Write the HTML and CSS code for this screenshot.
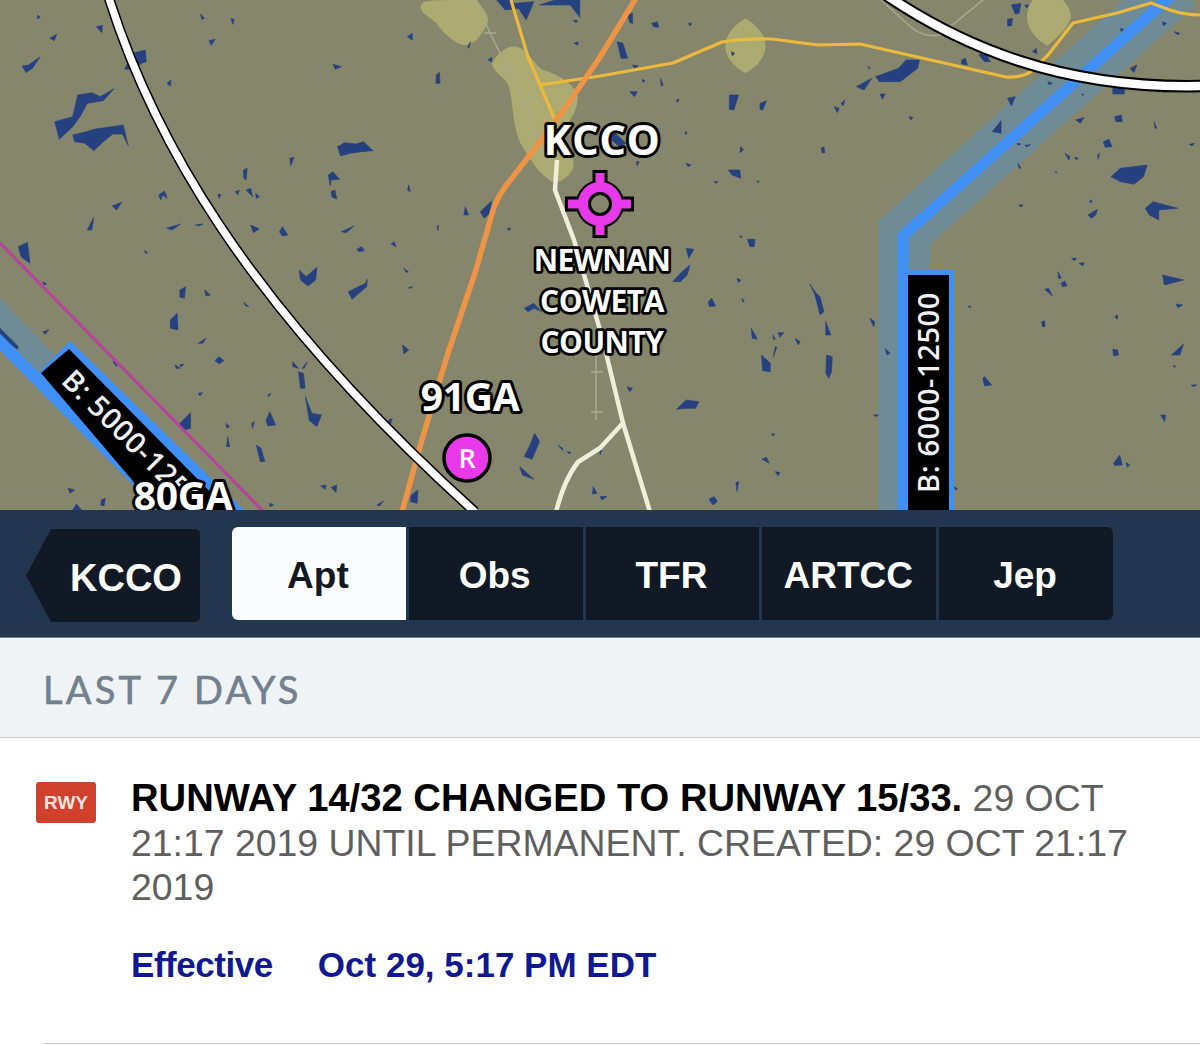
FILE: index.html
```
<!DOCTYPE html>
<html lang="en">
<head>
<meta charset="utf-8">
<title>KCCO</title>
<link rel="stylesheet" href="styles.css">
</head>
<body>
<div class="map">
<svg class="map-svg" width="1200" height="510" viewBox="0 0 1200 510">
  <rect class="land" width="1200" height="510"/>
  <g transform="scale(.3827 .3333)">
    <path class="urban" d="M1100 15C1110 0 1120 0 1245 0C1265 30 1285 50 1270 80C1255 110 1240 135 1210 135C1180 125 1160 100 1140 70C1125 50 1095 40 1100 15Z"/>
    <path class="urban" d="M1285 190C1300 160 1325 135 1350 140C1385 150 1390 190 1420 210C1460 225 1500 250 1510 290C1510 340 1480 370 1470 400C1480 440 1510 470 1495 510C1480 540 1450 560 1430 535C1400 510 1380 470 1360 430C1340 380 1340 300 1330 260C1320 230 1290 220 1285 190Z"/>
  </g>
  <g transform="translate(600 0) scale(.3827 .3333)">
    <path class="urban" d="M380 55C445 100 455 170 380 220C305 170 315 100 380 55Z"/>
    <path class="urban" d="M1130 0L1210 0C1240 40 1235 60 1205 100L1170 137C1130 115 1095 60 1130 0Z"/>
  </g>
  <path class="band" d="M904 520L904 233L1178 -14"/>
  <path class="blue-thin" d="M903 520L903 236L1182 -14"/>
  <polygon class="band-fill" points="0,298 55,355 35,378 0,340"/>
  <g transform="scale(.3827 .3333)">
    <path class="water" d="M99 45 105 52 97 57ZM252 80 268 76 266 98ZM130 115 148 103 142 122ZM603 56 612 58 609 73ZM524 42 534 55 527 58ZM546 122 562 118 552 136ZM58 198 75 195 105 170 85 205 68 218ZM870 193 892 200 876 208ZM1064 110 1078 100 1077 120ZM1140 225 1148 217 1150 250 1139 250ZM436 250 447 240 445 258ZM333 190 345 160 380 150 382 185 370 190 350 208 326 208ZM1298 0 1330 0 1345 10 1395 5 1375 60 1355 25 1320 30ZM1410 15 1450 0 1515 0 1515 52 1490 15ZM1500 130 1510 125 1510 135ZM1498 60 1510 62 1505 68ZM1222 140 1230 125 1225 145ZM1275 180 1285 172 1285 185Z"/>
    <path class="water" d="M143 365 175 355 190 350 203 285 240 278 262 290 298 266 270 302 228 310 212 345 190 380 155 418ZM190 405 225 395 245 388 290 380 322 375 335 437 320 402 295 402 270 425 245 452 222 430 195 425ZM882 440 900 428 930 432 950 425 975 452 945 455 915 460 890 468ZM757 475 768 472 760 497ZM636 510 646 505 643 540 637 535ZM858 525 870 515 887 538 865 540 863 558ZM865 575 875 570 880 597 868 592ZM1068 555 1072 575 1065 570ZM1216 620 1224 645 1212 645ZM1255 635 1285 603 1280 640 1265 655ZM1142 680 1146 675 1144 692ZM1325 685 1335 685 1330 692ZM415 585 430 573 437 595 425 585 420 600ZM293 618 318 607 305 630ZM228 690 245 652 240 690ZM435 685 472 672 450 690ZM510 675 530 672 520 678ZM655 675 677 687 662 698ZM730 695 738 680 752 705 738 708ZM892 695 925 678 905 698ZM932 748 945 740 952 752 938 755ZM1022 732 1030 725 1035 740ZM1055 805 1067 815 1062 818ZM1067 863 1078 860 1070 866ZM48 740 72 727 78 790 55 770ZM782 810 800 830 828 802 825 840 805 858 785 840ZM910 875 955 850 960 838 958 860 920 898ZM470 870 485 860 482 895 470 892ZM535 870 550 885 538 888ZM637 907 650 920 642 918ZM445 960 463 940 465 990 445 985ZM518 1030 538 1015 530 1030ZM562 1082 572 1070 585 1082 573 1092ZM112 995 128 990 118 1003ZM112 845 122 852 115 855ZM1052 1035 1068 1050 1055 1062ZM1370 925 1395 910 1415 935 1395 925 1380 935Z"/>
    <path class="water" d="M765 1085 780 1105 765 1100ZM790 1105 803 1085 795 1105ZM780 1115 793 1120 797 1165 785 1165ZM798 1190 815 1240 840 1245 828 1280 808 1262ZM1010 1265 1025 1255 1020 1275ZM470 1270 498 1238 498 1285 475 1292ZM695 1262 705 1235 720 1275 700 1278ZM658 1270 665 1265 660 1285ZM590 1270 600 1280 593 1285ZM670 1335 682 1345 692 1385 680 1385ZM595 1310 600 1340 592 1340ZM1385 1335 1397 1300 1410 1325 1390 1378 1370 1370ZM1458 1335 1470 1345 1470 1352ZM1482 1355 1492 1358 1488 1362ZM1358 1400 1395 1438 1365 1425ZM178 1465 195 1470 183 1480ZM265 1500 275 1495 272 1518 263 1515ZM190 1530 200 1512 213 1530ZM838 1458 852 1455 850 1468ZM865 1462 880 1455 878 1478ZM985 1515 1002 1503 992 1518ZM1075 1485 1092 1470 1090 1510 1072 1505ZM1550 1460 1560 1480 1548 1482ZM705 1510 715 1515 705 1520ZM458 1095 470 1105 460 1105ZM470 1095 480 1092 472 1102ZM518 1180 530 1178 522 1187ZM700 1185 708 1180 702 1190ZM295 1085 305 1080 305 1100ZM378 752 386 758 380 760ZM570 582 578 585 572 595ZM615 575 625 570 622 585ZM643 570 655 565 660 590ZM668 580 678 590 670 595ZM0 985 48 1040 45 1048 0 1010Z"/>
  </g>
  <g transform="translate(600 0) scale(.3827 .3333)">
    <path class="water" d="M72 45 85 40 85 70 78 68ZM135 70 150 65 153 82 140 80ZM232 68 240 72 234 78ZM45 125 60 130 72 175 55 175ZM85 195 100 198 90 205ZM110 238 118 243 112 247ZM158 235 165 255 160 258ZM78 275 98 275 90 290ZM200 300 207 298 202 308ZM338 285 362 285 350 330 338 328ZM418 310 435 303 425 330 418 328ZM343 155 352 160 346 168ZM670 260 710 235 690 270ZM720 230 780 205 800 180 835 180 830 205 785 245 730 245ZM732 282 745 282 738 298ZM630 310 640 300 635 318ZM612 320 625 325 620 338ZM808 350 818 352 812 360ZM368 440 375 450 365 458ZM578 445 585 440 588 458 580 458ZM225 490 238 495 230 500ZM95 485 102 485 97 498ZM335 510 365 510 368 535 345 525ZM298 545 308 545 302 550ZM410 543 416 543 413 548ZM222 395 228 398 224 404ZM20 410 40 400 68 430 50 440ZM385 718 405 718 403 740 392 740ZM365 707 372 710 368 713ZM225 745 245 748 232 775ZM190 845 210 820 235 795 228 825 210 845ZM358 835 368 840 362 848ZM283 905 292 895 302 918 285 920ZM372 895 377 905 372 905ZM548 852 565 880 575 890 585 935 575 945 565 900 560 880ZM590 965 603 1005 590 1005ZM395 985 408 1010 410 1018 398 1015ZM452 1005 458 1018 453 1018ZM465 998 480 998 470 1012ZM510 1015 523 1025 518 1035ZM458 1040 462 1042 453 1070ZM422 1065 445 1090 445 1115 425 1112ZM592 1065 607 1070 605 1115 598 1135 590 1120ZM70 1160 85 1165 78 1175ZM200 1228 225 1200 258 1205 250 1225 225 1225ZM705 955 718 965 715 980ZM745 1045 758 1060 750 1065ZM715 1245 728 1245 720 1250ZM448 1302 457 1302 452 1308ZM423 1378 435 1372 442 1390ZM458 1415 470 1418 465 1428ZM355 1448 362 1445 358 1475ZM285 1498 298 1490 307 1505 295 1515ZM0 1490 18 1490 5 1500ZM0 1350 5 1350 0 1365ZM925 1460 935 1468 928 1468Z"/>
    <path class="water" d="M1025 395 1048 362 1048 400ZM1065 295 1085 290 1075 318ZM1090 430 1100 432 1092 436ZM1110 436 1125 434 1115 440ZM1092 490 1100 505 1095 505ZM1170 245 1182 250 1174 255ZM1243 360 1265 352 1255 370ZM1345 350 1362 345 1365 365 1348 365ZM1315 425 1330 418 1338 440 1320 442ZM1448 365 1455 385 1450 385ZM1540 433 1553 430 1547 438ZM1215 460 1228 470 1225 480ZM1240 472 1250 475 1245 480ZM1300 465 1305 460 1302 478ZM1335 530 1360 505 1430 495 1420 530 1395 553 1360 545ZM1190 515 1194 517 1192 520ZM1095 615 1105 615 1100 622ZM1278 605 1285 600 1285 608ZM1275 645 1300 628 1295 645 1285 655ZM1425 625 1445 605 1510 625 1460 630 1460 660 1435 645ZM1232 775 1245 775 1240 782ZM1252 790 1265 788 1262 798ZM1197 815 1205 835 1198 835ZM1205 850 1215 843 1220 858 1208 860ZM1162 868 1172 865 1182 888ZM1470 825 1525 840 1475 855ZM1505 912 1523 915 1510 923ZM1154 965 1162 962 1163 980 1156 980ZM1345 950 1352 945 1352 958ZM1340 1048 1352 1050 1355 1065 1342 1068ZM1493 1065 1525 1032 1515 1065ZM1498 1097 1503 1097 1502 1103ZM1000 1135 1005 1130 1023 1155 1005 1158ZM1465 1245 1478 1245 1475 1265ZM1342 1390 1358 1365 1365 1395 1345 1397ZM1375 1388 1384 1395 1378 1402ZM962 918 970 920 965 923ZM1545 1155 1560 1155 1550 1160ZM1075 15 1100 10 1095 40 1085 42ZM1065 58 1078 55 1075 78 1065 78ZM1110 15 1120 15 1115 24ZM945 180 955 175 960 195 945 192ZM990 165 1005 155 1020 185 1005 185ZM1130 155 1140 145 1142 162ZM1385 205 1403 195 1395 218ZM1360 85 1368 88 1362 95ZM1470 65 1480 70 1472 78ZM1500 95 1515 100 1510 105ZM1258 282 1265 283 1260 286ZM1340 265 1370 265 1370 282 1340 282ZM700 200 706 203 702 206Z"/>
  </g>
  <path class="faint" d="M476 0L490 33L507 67L526 103L551 180M596 340V420M881 0L912 28Q925 38 940 35L983 0M484 33H496M502 68H514M520 103H532M591 372H603M591 412H603"/>
  <path class="road" d="M557 160L555 190L574 240L600 330L606 353L623 423L650 512M623 423L600 448L578 462Q564 480 556 512"/>
  <path class="yellow" d="M511 0L528 57L540 85L555 120M540 85L600 76L673 63L722 42Q745 38 772 39L818 45L860 44L1006 77Q1018 78 1029 73L1048 55L1073 23L1117 13L1151 3L1170 10Q1185 15 1200 15"/>
  <path class="orange" d="M636 -2L600 57L566 107L536 147L505 187Q498 197 494 207L475 273L448 353L421 443L402 512"/>
  <path class="edge-line" d="M0 243L264 512"/>
  <path class="blue-line" d="M-5 337L170 514"/>
  <polygon class="label-edge" points="70,341 36,376 165,514 248,514"/>
  <polygon class="label-bg" points="69,349 41,373 161,514 232,514"/>
  <text class="chip-text" transform="translate(60 382) rotate(45)">B: 5000-12500</text>
  <rect class="blue-fill" x="908" y="270" width="46" height="240"/>
  <rect class="label-bg" x="908" y="275" width="41" height="235"/>
  <text class="chip-text" transform="translate(939 493) rotate(-90)">B: 6000-12500</text>
  <path class="arc-outer arc-l" d="M108 -5C150 130 240 300 475 512"/>
  <path class="arc-inner arc-l" d="M108 -5C150 130 240 300 475 512"/>
  <path class="arc-outer arc-r" d="M886 -5C960 45 1060 90 1205 86"/>
  <path class="arc-inner arc-r" d="M886 -5C960 45 1060 90 1205 86"/>
  <g class="target">
    <path class="target-out" d="M600 170V186M600 222V238M565 204H582M618 204H634"/>
    <circle class="ring-out" cx="600" cy="204" r="16.5"/>
    <path class="target-in" d="M600 173V186M600 222V235M568 204H582M618 204H631"/>
    <circle class="ring-in" cx="600" cy="204" r="17"/>
  </g>
  <circle class="pin" cx="467" cy="458" r="23"/>
  <text class="pin-text" x="467" y="468">R</text>
  <text class="lbl lbl-xl" x="602" y="155">KCCO</text>
  <text class="lbl lbl-sm" x="602" y="271">NEWNAN</text>
  <text class="lbl lbl-sm" x="602" y="312">COWETA</text>
  <text class="lbl lbl-sm" x="602" y="353">COUNTY</text>
  <text class="lbl lbl-lg" x="470" y="411">91GA</text>
  <text class="lbl lbl-lg" x="183" y="510">80GA</text>
</svg>
</div>
<nav class="bar">
  <a class="back">KCCO</a>
  <div class="tabs">
    <a class="tab tab-on">Apt</a>
    <a class="tab">Obs</a>
    <a class="tab">TFR</a>
    <a class="tab">ARTCC</a>
    <a class="tab">Jep</a>
  </div>
</nav>
<header class="section">LAST 7 DAYS</header>
<main>
  <article class="notam">
    <span class="badge">RWY</span>
    <div class="notam-body">
      <p class="notam-text"><strong>RUNWAY 14/32 CHANGED TO RUNWAY 15/33.</strong> 29 OCT 21:17 2019 UNTIL PERMANENT. CREATED: 29 OCT 21:17 2019</p>
      <p class="effective"><span class="effective-key">Effective</span><span>Oct 29, 5:17 PM EDT</span></p>
    </div>
  </article>
  <hr class="rule">
</main>
</body>
</html>
```
FILE: styles.css
```
html, body { margin: 0; padding: 0; background: #fff; }
body { width: 1200px; height: 1045px; overflow: hidden; font-family: "Liberation Sans", Arial, sans-serif; }

.map { height: 510px; overflow: hidden; }
.map-svg { display: block; }
.land { fill: #85866c; }
.urban { fill: #abaa70; }
.water { fill: #25417f; stroke: #25417f; stroke-width: .6; stroke-linejoin: round; vector-effect: non-scaling-stroke; }
.band { fill: none; stroke: #6f8c96; stroke-width: 52; stroke-linejoin: miter; }
.blue-thin { fill: none; stroke: #3f8ff5; stroke-width: 11; stroke-linejoin: miter; }
.band-fill { fill: #6f8c96; }
.faint { fill: none; stroke: #a9a98f; stroke-width: 1.5; }
.road { fill: none; stroke: #efeedb; stroke-width: 4.5; stroke-linejoin: round; }
.yellow { fill: none; stroke: #ebb93e; stroke-width: 3.2; stroke-linejoin: round; }
.orange { fill: none; stroke: #ee9446; stroke-width: 5.5; stroke-linejoin: round; }
.edge-line { fill: none; stroke: #b8439a; stroke-width: 3; }
.blue-line { fill: none; stroke: #3f8ff5; stroke-width: 12; }
.label-edge { fill: #3f8ff5; }
.blue-fill { fill: #3f8ff5; }
.label-bg { fill: #000; }
.chip-text { fill: #eef2f5; font-family: "Open Sans", sans-serif; font-weight: 600; font-size: 29px; letter-spacing: .6px; }
.arc-outer { fill: none; stroke: #000; }
.arc-inner { fill: none; stroke: #fff; }
.arc-outer.arc-l { stroke-width: 10.5; }
.arc-inner.arc-l { stroke-width: 7.5; }
.arc-outer.arc-r { stroke-width: 12.5; }
.arc-inner.arc-r { stroke-width: 8.5; }
.target-out { fill: none; stroke: #000; stroke-width: 15; }
.ring-out { fill: none; stroke: #000; stroke-width: 15; }
.target-in { fill: none; stroke: #e83aea; stroke-width: 9; }
.ring-in { fill: none; stroke: #e83aea; stroke-width: 10; }
.pin { fill: #e83aea; stroke: #000; stroke-width: 3.5; }
.pin-text { fill: #fff; font-family: "Open Sans", sans-serif; font-weight: 600; font-size: 27px; text-anchor: middle; }
.lbl { fill: #fff; stroke: #000; paint-order: stroke; stroke-linejoin: round; font-family: "Open Sans", sans-serif; font-weight: 700; text-anchor: middle; }
.lbl-xl { font-size: 42px; stroke-width: 6; letter-spacing: .5px; }
.lbl-lg { font-size: 39px; stroke-width: 6; letter-spacing: -.3px; }
.lbl-sm { font-size: 30px; stroke-width: 5.5; letter-spacing: -.5px; }

.bar { height: 128px; box-sizing: border-box; background: #23364f; display: flex; align-items: flex-start; padding: 17px 0 0 26px; border-bottom: 1px solid #6e7f92; }
.back { margin-top: 2px; width: 174px; height: 93px; box-sizing: border-box; padding: 5px 0 0 44px; display: flex; align-items: center; background: #111a24; color: #fff; font-weight: 700; font-size: 38px; clip-path: polygon(25px 0, 100% 0, 100% 100%, 25px 100%, 0 50%); border-radius: 0 5px 5px 0; }
.tabs { margin-left: 32px; display: flex; gap: 3px; }
.tab { width: 173.8px; height: 93px; box-sizing: border-box; padding: 4px 2px 0 0; display: flex; align-items: center; justify-content: center; background: #111a24; color: #fff; font-weight: 700; font-size: 37px; }
.tab:first-child { border-radius: 6px 0 0 6px; }
.tab:last-child { border-radius: 0 6px 6px 0; }
.tab-on { background: #fbfcfe; color: #111a24; }

.section { height: 100px; box-sizing: border-box; padding: 3px 0 0 43px; background: #eff3f6; border-bottom: 1px solid #cfd2d5; display: flex; align-items: center; color: #72808f; font-family: Lato, sans-serif; font-weight: 400; font-size: 38px; letter-spacing: 3.2px; -webkit-text-stroke: .6px #72808f; }

.notam { display: flex; align-items: flex-start; padding: 38px 60px 0 36px; gap: 35px; height: 305px; box-sizing: border-box; }
.badge { flex: none; width: 60px; height: 41px; margin-top: 6px; display: flex; align-items: center; justify-content: center; background: #d0402c; color: #f7e6e2; border-radius: 3px; font-weight: 700; font-size: 19px; }
.notam-body { flex: 1; }
.notam-text { margin: 0; font-size: 37.4px; line-height: 44.6px; color: #5f5f5f; }
.notam-text strong { color: #000; font-size: 38.2px; }
.effective { margin: 32px 0 0; display: flex; gap: 45px; font-size: 35px; line-height: 45px; font-weight: 700; color: #10198f; }
.effective-key { letter-spacing: -.45px; }
.rule { margin: 0 0 0 44px; border: 0; border-top: 1px solid #c8c8c8; }
```
